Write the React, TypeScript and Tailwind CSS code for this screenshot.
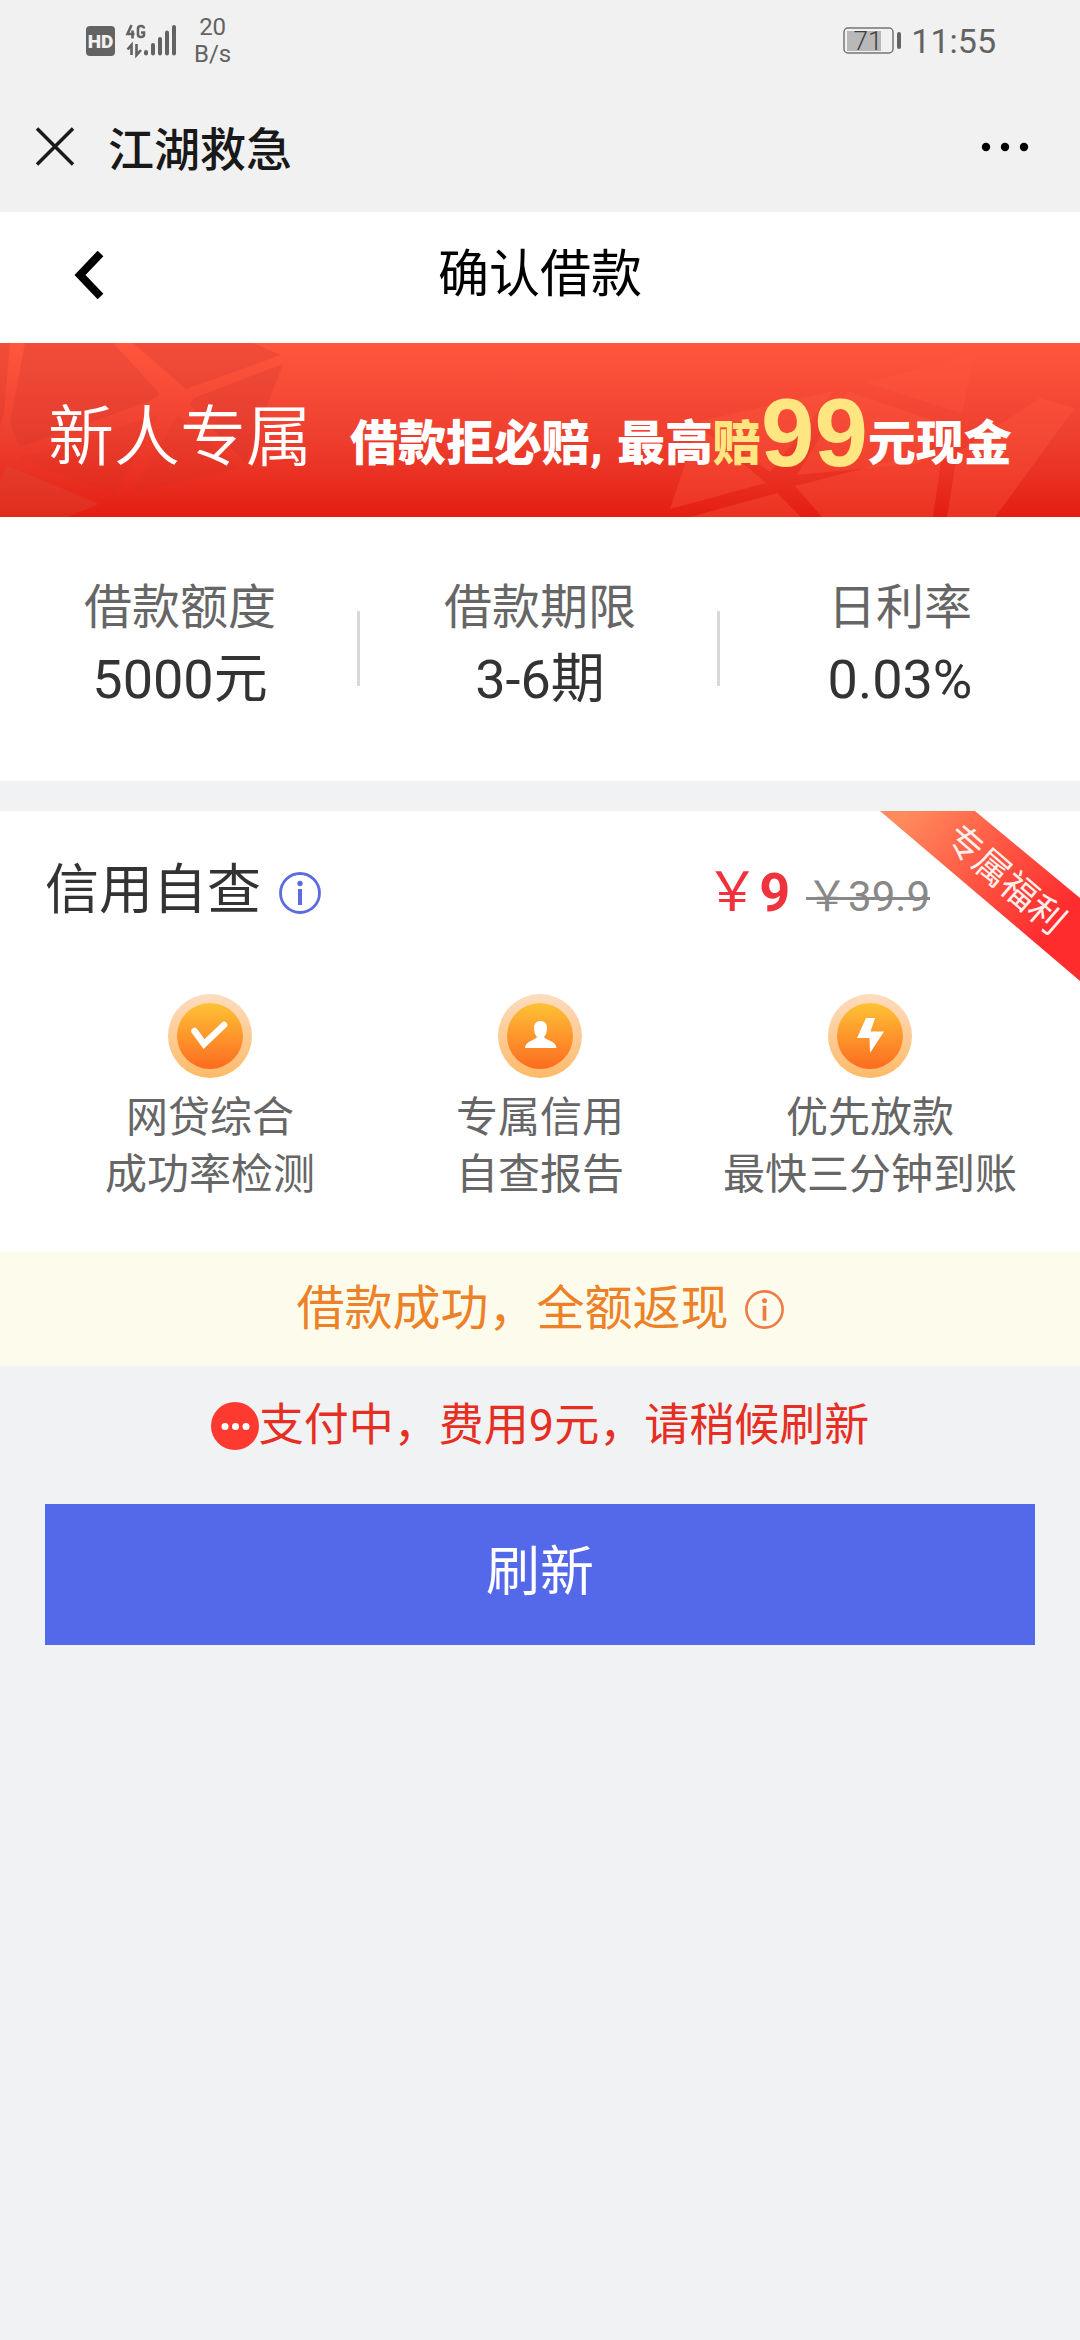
import { useState } from "react";

const stats = [
  { label: "借款额度", value: "5000元" },
  { label: "借款期限", value: "3-6期" },
  { label: "日利率", value: "0.03%" },
];

const benefits = [
  { icon: "check", lines: ["网贷综合", "成功率检测"] },
  { icon: "person", lines: ["专属信用", "自查报告"] },
  { icon: "bolt", lines: ["优先放款", "最快三分钟到账"] },
];

// ---- ICONS ----
const SignalIcon = () => (
  <svg width="96" height="36" viewBox="0 0 96 36" aria-hidden="true">
    <rect x="2" y="3" width="29" height="30" rx="4" fill="#636363" />
    <text x="16.500" y="25" textAnchor="middle" fontSize="19" fontWeight="900" fill="#f1f1f1">HD</text>
    <g fill="none" stroke="#636363" strokeWidth="2.6">
      <path d="M47.500 2 L43.500 11 H50.500 M48.500 7.500 V15.500" />
      <path d="M60 5.500 Q60 3 57 3 Q54 3 54 5.500 V11.500 Q54 14 57 14 Q60 14 60 11.500 V9.500 H57" />
      <path d="M47.500 32 V22 L43.500 26.500" />
      <path d="M52.500 21 V32 L57 27" />
    </g>
    <g stroke="#636363" strokeWidth="4" strokeLinecap="round">
      <path d="M62 29 V30.500" />
      <path d="M69 22 V30.500" />
      <path d="M76 16 V30.500" />
      <path d="M83 9.500 V30.500" />
      <path d="M90 4 V30.500" />
    </g>
  </svg>
);

const BatteryIcon = () => (
  <svg width="60" height="28" viewBox="0 0 60 28" aria-hidden="true">
    <rect x="1" y="1" width="49" height="25" rx="4" fill="none" stroke="#757575" strokeWidth="1.5" />
    <rect x="4" y="4" width="34" height="20" fill="#b8b8b8" />
    <rect x="54" y="5" width="4" height="17" rx="2" fill="#636363" />
    <text x="25" y="23" textAnchor="middle" fontSize="26" fontWeight="300" fill="#3f3f3f">71</text>
  </svg>
);

const InfoIcon = ({ className }: { className: string }) => (
  <svg className={className} viewBox="0 0 42 42" fill="none" aria-hidden="true">
    <circle cx="21" cy="21" r="19.500" stroke="currentColor" strokeWidth="2.800" />
    <circle cx="21" cy="11.500" r="2.700" fill="currentColor" />
    <path d="M21 17 V33" stroke="currentColor" strokeWidth="4" />
  </svg>
);

const BenefitIcon = ({ name }: { name: string }) => (
  <svg width="84" height="84" viewBox="0 0 84 84" aria-hidden="true">
    <defs>
      <linearGradient id={`ring-${name}`} x1="0" y1="0" x2="0" y2="1">
        <stop offset="0" stopColor="#fddcc0" />
        <stop offset="1" stopColor="#feba68" />
      </linearGradient>
      <linearGradient id={`disc-${name}`} x1="0" y1="0" x2="0" y2="1">
        <stop offset="0" stopColor="#fec236" />
        <stop offset="1" stopColor="#fd6b20" />
      </linearGradient>
    </defs>
    <circle cx="42" cy="42" r="42" fill={`url(#ring-${name})`} />
    <circle cx="42" cy="42" r="33" fill={`url(#disc-${name})`} />
    {name === "check" && (
      <path d="M26.500 37 L36 50 L56 31" fill="none" stroke="#fff" strokeWidth="6.500" strokeLinecap="round" />
    )}
    {name === "person" && (
      <path
        d="M42.500 27 C38 27 36 30 36 34 C36 38 37 41 39 43 C38 46 27 47 27 54 H58.500 C58.500 47 47 46 46 43 C48 41 49 38 49 34 C49 30 47 27 42.500 27 Z"
        fill="#fff"
      />
    )}
    {name === "bolt" && (
      <path d="M38 24 H47 L42.500 37.500 H56 L42 59 L41.500 44 H29 Z" fill="#fff" />
    )}
  </svg>
);

const BannerArt = () => (
  <svg className="absolute inset-0 h-full w-full" viewBox="0 0 1080 174" preserveAspectRatio="none" aria-hidden="true">
    <g fill="#c8342c" fillOpacity="0.24">
      <path d="M0 0 H10 L4 70 L0 84 Z" />
      <path d="M25 0 H113 L160 51 L150 58 L20 104 L10 80 Z" />
      <path d="M133 0 H253 L281 12 L186 46 Z" />
      <path d="M283 21 L262 75 L246 120 L190 62 L194 55 Z" />
    </g>
    <g fill="#c8342c" fillOpacity="0.12">
      <path d="M158 72 L115 152 L20 115 Z" />
      <path d="M178 72 L240 125 L132 150 Z" />
    </g>
    <path d="M6 122 L99 161 L68 174 H0 V140 Z" fill="#d8503c" fillOpacity="0.3" />
    <g fill="#ff5a40" fillOpacity="0.34">
      <path d="M834 48 L770 129 L700 78 Z" />
      <path d="M698 82 L766 140 L670 166 Z" />
      <path d="M848 48 L940 80 L920 120 L797 132 Z" />
      <path d="M690 174 L777 150 L801 174 Z" />
      <path d="M795 143 L943 105 L933 174 H822 Z" />
      <path d="M957 110 L1040 55 L1075 65 L995 174 H947 Z" />
    </g>
    <path d="M865 40 L975 10 L962 70 Z" fill="#ff5a40" fillOpacity="0.3" />
  </svg>
);

const Ribbon = () => (
  <svg className="absolute top-0 right-0" width="200" height="171" viewBox="0 0 200 171">
    <defs>
      <linearGradient id="ribbon" gradientUnits="userSpaceOnUse" x1="30" y1="0" x2="170" y2="120">
        <stop offset="0" stopColor="#ff8a5c" />
        <stop offset="0.5" stopColor="#ff5643" />
        <stop offset="1" stopColor="#ff2c2e" />
      </linearGradient>
    </defs>
    <path d="M0 0 H95 L200 87 V170 Z" fill="url(#ribbon)" />
    <text x="126" y="81" transform="rotate(41 126 68)" textAnchor="middle" fontSize="36" fill="#ffefec">
      专属福利
    </text>
  </svg>
);

const App = () => {
  const [refreshing, setRefreshing] = useState(false);

  const handleRefresh = () => {
    setRefreshing(true);
    setTimeout(() => setRefreshing(false), 1000);
  };

  return (
    <div className="min-h-screen bg-[#f0f2f4] font-['Roboto','Noto_Sans_CJK_SC',sans-serif] text-[#333]">
      {/* phone status bar + webview title */}
      <header className="bg-[#f1f1f1]">
        <div className="flex h-[82px] items-center justify-between pr-[84px] pl-[84px] text-[#636363]">
          <div className="flex items-center gap-[14px]">
            <SignalIcon />
            <p className="text-center text-[24px] leading-[27px]">
              20<br />B/s
            </p>
          </div>
          <div className="flex items-center gap-[8px]">
            <BatteryIcon />
            <p className="text-[34px] leading-[40px]">11:55</p>
          </div>
        </div>
        <div className="flex h-[130px] items-center px-[35px]">
          <button type="button" aria-label="关闭">
            <svg width="40" height="40" viewBox="0 0 40 40" stroke="#1a1a1a" strokeWidth="3.500" aria-hidden="true">
              <path d="M2 1.500 L38 37.500 M38 1.500 L2 37.500" />
            </svg>
          </button>
          <p className="ml-[33px] flex-1 pt-[6px] text-[46px] leading-[60px] font-medium text-[#191919]">江湖救急</p>
          <button type="button" aria-label="更多" className="mr-[16px]">
            <svg width="48" height="10" viewBox="0 0 48 10" aria-hidden="true">
              <circle cx="5" cy="5" r="4.200" />
              <circle cx="24" cy="5" r="4.200" />
              <circle cx="43" cy="5" r="4.200" />
            </svg>
          </button>
        </div>
      </header>

      <nav className="grid h-[131px] grid-cols-[1fr_auto_1fr] items-center bg-white pb-[6px]">
        <button type="button" aria-label="返回" className="ml-[74px] justify-self-start">
          <svg width="30" height="48" viewBox="0 0 30 48" fill="none" stroke="#000" strokeWidth="8" aria-hidden="true">
            <path d="M26.500 2.500 L6 24 L26.500 45.500" />
          </svg>
        </button>
        <h1 className="text-[51px] leading-[68px] text-black">确认借款</h1>
      </nav>

      <section className="relative h-[174px] overflow-hidden bg-linear-to-b from-[#ff563d] via-[#ef4130] to-[#e41c10]">
        <BannerArt />
        <div className="relative flex items-end pt-[35px] pl-[48px] text-white">
          <span className="text-[66px] leading-[100px] font-[350]">新人专属</span>
          <p className="ml-[38px] flex items-end text-[48px] leading-[88px] font-black">
            <span className="mr-[14px]">借款拒必赔,</span>
            最高
            <span className="text-[#ffe680]">赔</span>
            <span className="font-['Liberation_Sans',sans-serif] text-[96px] leading-[110px] font-bold text-[#ffe680]">99</span>
            元现金
          </p>
        </div>
      </section>

      <section className="grid h-[264px] grid-cols-3 bg-white pt-[55px] text-center">
        {stats.map((item, index) => (
          <div className="relative" key={index}>
            <p className="text-[48px] leading-[72px] text-[#666]">{item.label}</p>
            <p className="text-[54px] leading-[72px]">{item.value}</p>
            {index < 2 && <span className="absolute top-[39px] right-0 h-[75px] w-[3px] bg-[#d8d8d8]"></span>}
          </div>
        ))}
      </section>

      <section className="relative mt-[30px] h-[441px] bg-white px-[45px] pt-[40px]">
        <Ribbon />
        <div className="flex items-center pr-[105px]">
          <h2 className="text-[54px] leading-[76px]">信用自查</h2>
          <InfoIcon className="mt-[4px] ml-[18px] h-[42px] w-[42px] text-[#5a6ce0]" />
          <p className="ml-auto pt-[4px] text-[54px] leading-[76px] text-[#f0323c]">
            ￥<b>9</b>
            <del className="ml-[16px] text-[42px] leading-none text-[#888] decoration-[3px]">￥39.9</del>
          </p>
        </div>
        <div className="mt-[63px] grid grid-cols-3">
          {benefits.map((item) => (
            <div className="flex flex-col items-center" key={item.icon}>
              <BenefitIcon name={item.icon} />
              <p className="mt-[11px] text-center text-[42px] leading-[57px] whitespace-nowrap text-[#666]">
                {item.lines[0]}<br />{item.lines[1]}
              </p>
            </div>
          ))}
        </div>
      </section>

      <div className="flex h-[114px] items-center justify-center gap-[16px] bg-[#fdfbeb]">
        <p className="text-[48px] leading-[72px] text-[#ec8128]">借款成功，全额返现</p>
        <InfoIcon className="h-[39px] w-[39px] text-[#ee7a45]" />
      </div>

      <div className="mt-[24px] flex h-[72px] items-center justify-center">
        <svg width="48" height="48" viewBox="0 0 48 48" aria-hidden="true">
          <circle cx="24" cy="24" r="24" fill="#fe3a30" />
          <circle cx="14" cy="24.500" r="3.500" fill="#fff" />
          <circle cx="24.500" cy="24.500" r="3.500" fill="#fff" />
          <circle cx="35" cy="24.500" r="3.500" fill="#fff" />
        </svg>
        <p className="text-[45px] leading-[72px] text-[#e62e22]">支付中，费用9元，请稍候刷新</p>
      </div>

      <div className="mt-[42px] px-[45px]">
        <button
          type="button"
          onClick={handleRefresh}
          disabled={refreshing}
          className="h-[141px] w-full bg-[#5469ea] pb-[4px] text-[54px] leading-[72px] text-white"
        >
          刷新
        </button>
      </div>
    </div>
  );
};

export default App;
